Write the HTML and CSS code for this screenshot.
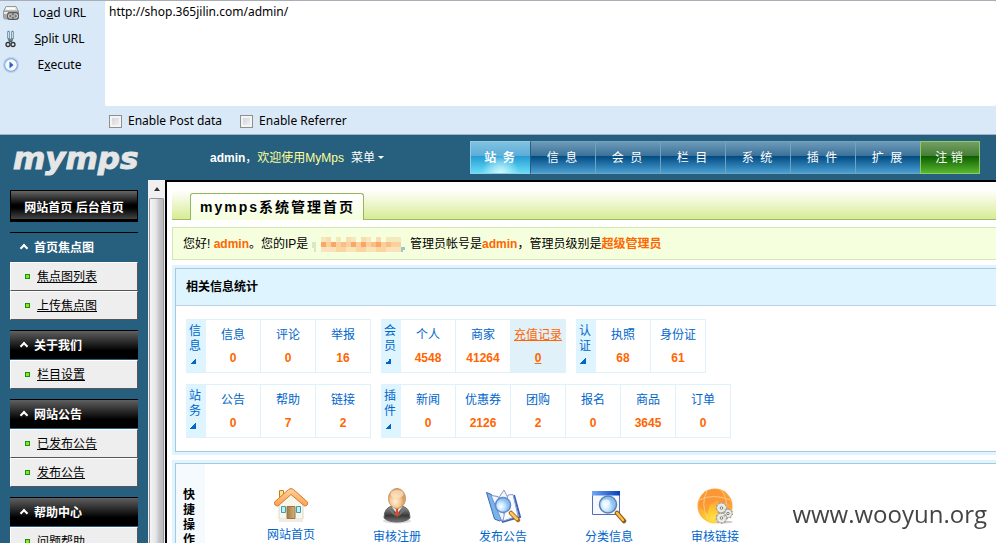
FILE: index.html
```html
<!DOCTYPE html>
<html lang="zh-CN">
<head>
<meta charset="utf-8">
<title>mymps系统管理首页</title>
<link rel="stylesheet" href="styles.css">
</head>
<body>
<form class="toolbar">
  <div class="commands">
    <button type="button" class="command">
      <svg width="18" height="18" viewBox="0 0 18 18"><path d="M4 2.500h10l2.500 5H1.500z" fill="#e4e4e1" stroke="#9a9a9a"/><path d="M1.500 7h15v6q-1 2-3 2h-10q-2 0-2-2z" fill="#a9a9a9" stroke="#999"/><path d="M4 4.500h9" stroke="#fff" stroke-width="2"/><path d="M2 9h4" stroke="#e8e8e8" stroke-width="2"/><rect x="5.500" y="8.500" width="11" height="7" rx="2" fill="#777" stroke="#5c5c5c"/><path d="M10 10H8.500a1.500 1.500 0 0 0 0 4H10M12 10h1.500a1.500 1.500 0 0 1 0 4H12M9 12h4" fill="none" stroke="#ddd"/></svg>
      <span>Lo<u>a</u>d URL</span>
    </button>
    <button type="button" class="command">
      <svg width="18" height="18" viewBox="0 0 18 18"><path d="M6.500 2v6l1.500 3M10.500 2v6L9 11" fill="none" stroke="#638795" stroke-width="2.500" stroke-linecap="round"/><path d="M6.500 2v6M10.500 2v6" stroke="#c9dce3"/><path d="M7 10.500l1.500 1.500 1.500-1.500" fill="none" stroke="#333"/><circle cx="6" cy="14.500" r="2" fill="none" stroke="#333" stroke-width="1.300"/><circle cx="11" cy="14.500" r="2" fill="none" stroke="#333" stroke-width="1.300"/></svg>
      <span><u>S</u>plit URL</span>
    </button>
    <button type="button" class="command">
      <svg width="18" height="18" viewBox="0 0 18 18"><circle cx="9" cy="9" r="8" fill="#b9d1ef"/><circle cx="9" cy="9" r="6.800" fill="#86a8d2"/><circle cx="9" cy="9" r="5.800" fill="#f6faff"/><path d="M7.500 5.500l4 3.500-4 3.500z" fill="#2563c4"/></svg>
      <span>E<u>x</u>ecute</span>
    </button>
  </div>
  <div class="request">
    <textarea class="url" aria-label="URL" spellcheck="false">http://shop.365jilin.com/admin/</textarea>
    <div class="options">
      <label class="option"><input type="checkbox">Enable Post data</label>
      <label class="option"><input type="checkbox">Enable Referrer</label>
    </div>
  </div>
</form>
<header class="header">
  <a class="logo" href="#">mymps</a>
  <p class="welcome"><b>admin</b>，<span>欢迎使用MyMps</span><a class="drop" href="#">菜单</a></p>
  <nav class="tabs">
    <a class="tab active" href="#">站&nbsp;&nbsp;务</a>
    <a class="tab" href="#">信&nbsp;&nbsp;息</a>
    <a class="tab" href="#">会&nbsp;&nbsp;员</a>
    <a class="tab" href="#">栏&nbsp;&nbsp;目</a>
    <a class="tab" href="#">系&nbsp;&nbsp;统</a>
    <a class="tab" href="#">插&nbsp;&nbsp;件</a>
    <a class="tab" href="#">扩&nbsp;&nbsp;展</a>
    <a class="tab logout" href="#">注&nbsp;销</a>
  </nav>
</header>
<div class="workspace">
  <aside class="sidebar">
    <div class="home"><a href="#">网站首页</a> <a href="#">后台首页</a></div>
    <section class="menu current">
      <h2>首页焦点图</h2>
      <ul><li><a href="#">焦点图列表</a></li><li><a href="#">上传焦点图</a></li></ul>
    </section>
    <section class="menu">
      <h2>关于我们</h2>
      <ul><li><a href="#">栏目设置</a></li></ul>
    </section>
    <section class="menu">
      <h2>网站公告</h2>
      <ul><li><a href="#">已发布公告</a></li><li><a href="#">发布公告</a></li></ul>
    </section>
    <section class="menu">
      <h2>帮助中心</h2>
      <ul><li><a href="#">问题帮助</a></li></ul>
    </section>
  </aside>
  <div class="scrollbar"><div class="scroll-up"></div><div class="thumb"></div></div>
  <main class="main">
    <div class="titlebar"><h1>mymps系统管理首页</h1></div>
    <p class="notice">您好! <b>admin</b>。您的IP是
      <svg class="mosaic" width="95" height="15" viewBox="0 0 95 15" shape-rendering="crispEdges"><path d="M0 5h4v10H2V11H0z" fill="#dbe6c8"/><path d="M9 0h5v5h-5zM24 0h5v5h-5zM39 0h5v5h-5zM54 0h5v5h-5zM74 0h15v5H74z" fill="#f4e8bd"/><path d="M14 0h5v5h-5zM34 0h5v5h-5zM49 0h5v5h-5zM64 0h5v5h-5z" fill="#fbdcae"/><path d="M9 5h80v5H9z" fill="#fbd0a0"/><path d="M9 5h5v5h-5zM19 5h5v5h-5zM39 5h5v5h-5zM49 5h5v5h-5zM64 5h5v5h-5z" fill="#faa765"/><path d="M29 5h5v5h-5zM59 5h5v5h-5zM74 5h5v5h-5z" fill="#fcbd84"/><path d="M9 10h80v5H9z" fill="#f8e4b8"/><path d="M24 10h10v5H24zM44 10h10v5H44zM64 10h10v5H64z" fill="#fad5a0"/><path d="M89 10h4v3h-2v2h-2z" fill="#9bcac3"/></svg>
      管理员帐号是<b>admin</b>，管理员级别是<b>超级管理员</b></p>
    <section class="panel">
      <h2>相关信息统计</h2>
      <div class="stats">
        <div class="row">
          <div class="group"><h3>信息</h3><a href="#">信息<b>0</b></a><a href="#">评论<b>0</b></a><a href="#">举报<b>16</b></a></div>
          <div class="group"><h3>会员</h3><a href="#">个人<b>4548</b></a><a href="#">商家<b>41264</b></a><a class="hovered" href="#">充值记录<b>0</b></a></div>
          <div class="group"><h3>认证</h3><a href="#">执照<b>68</b></a><a href="#">身份证<b>61</b></a></div>
        </div>
        <div class="row">
          <div class="group"><h3>站务</h3><a href="#">公告<b>0</b></a><a href="#">帮助<b>7</b></a><a href="#">链接<b>2</b></a></div>
          <div class="group"><h3>插件</h3><a href="#">新闻<b>0</b></a><a href="#">优惠券<b>2126</b></a><a href="#">团购<b>2</b></a><a href="#">报名<b>0</b></a><a href="#">商品<b>3645</b></a><a href="#">订单<b>0</b></a></div>
        </div>
      </div>
    </section>
    <section class="panel quick">
      <h2>快捷操作</h2>
      <ul class="shortcuts">
        <li><a href="#">
          <svg width="36" height="34" viewBox="0 0 36 34"><defs><linearGradient id="door" x2="1"><stop stop-color="#a37a42"/><stop offset="1" stop-color="#d3b27d"/></linearGradient><linearGradient id="roof" x2="0" y2="1"><stop stop-color="#ffd29d"/><stop offset="1" stop-color="#f9a254"/></linearGradient></defs><path d="M6.500 2.500h4v9h-4z" fill="#ffe098" stroke="#cf7b16"/><path d="M6 16L18 5l12 11v15H6z" fill="#faf6ea" stroke="#ddd8ca"/><path d="M6 31h24v3H6z" fill="#eeece5"/><path d="M14 18.500h8v12h-8z" fill="url(#door)" stroke="#9a7649"/><path d="M8.500 18.500h4v6h-4zM23.500 18.500h4v6h-4z" fill="#bdf0f5" stroke="#3d9eaf"/><path d="M1.500 14L15.500 1.500q2.500-2 5 0l14 12.500q.8 4-3 4L18 6.500 5 18Q1 18 1.500 14z" fill="url(#roof)" stroke="#d77a28"/></svg>
          网站首页</a></li>
        <li><a href="#">
          <svg width="36" height="36" viewBox="0 0 36 36"><defs><radialGradient id="face" cx=".4" cy=".65"><stop stop-color="#fff1df"/><stop offset=".6" stop-color="#f6c995"/><stop offset="1" stop-color="#d6a067"/></radialGradient><linearGradient id="suit" x2="0" y2="1"><stop stop-color="#9c9c9c"/><stop offset=".6" stop-color="#383838"/><stop offset="1" stop-color="#777"/></linearGradient></defs><ellipse cx="18" cy="33" rx="14" ry="2.500" fill="#ddd"/><path d="M5 30q0-11 9-12h8q9 1 9 12-4 4-13 4T5 30z" fill="url(#suit)" stroke="#666"/><path d="M13 19l5 7 5-7z" fill="#eee"/><path d="M16.500 20h3l-.5 3 1.500 3-2.500 3-2.500-3 1.500-3z" fill="#d64d2b"/><path d="M12 19l5 10-6-6zM24 19l-5 10 6-6z" fill="#777"/><ellipse cx="18" cy="10.500" rx="8.500" ry="10" fill="url(#face)" stroke="#c9975f"/><ellipse cx="18" cy="6" rx="6.500" ry="4" fill="#ffe7c8" opacity=".7"/></svg>
          审核注册</a></li>
        <li><a href="#">
          <svg width="36" height="36" viewBox="0 0 36 36"><defs><radialGradient id="lens" cx=".35" cy=".6"><stop stop-color="#fff"/><stop offset=".5" stop-color="#c9eaff"/><stop offset="1" stop-color="#8abfef"/></radialGradient></defs><path d="M13 11l6-9 6 12-6 14z" fill="#f5f7fc" stroke="#8c98b8"/><path d="M1.500 4.500l5 2 10 25-2 1.500-5-2z" fill="#78b4ec" stroke="#4564b4"/><path d="M6 7.500l7 1 7 20-3 5z" fill="#f0f6ff" stroke="#7890c5"/><path d="M29 7l6 22-18 5" fill="none" stroke="#3a63b5" stroke-width="2"/><path d="M23 7l5-.5L33 28l-15 5z" fill="#f7faff" stroke="#899bc9"/><circle cx="18" cy="17" r="7.500" fill="url(#lens)" stroke="#6486cb" stroke-width="1.500"/><path d="M26 25l7 7" stroke="#a56b19" stroke-width="4.500" stroke-linecap="round"/><path d="M26 25l6 6" stroke="#ffc85b" stroke-width="2.500" stroke-linecap="round"/></svg>
          发布公告</a></li>
        <li><a href="#">
          <svg width="36" height="36" viewBox="0 0 36 36"><defs><linearGradient id="bar" x2="1"><stop stop-color="#73a8f5"/><stop offset="1" stop-color="#063dbd"/></linearGradient></defs><path d="M1.500 3.500h27v23h-27z" fill="#f6f8fe" stroke="#536eb8"/><path d="M1 3h28v4.500H1z" fill="url(#bar)"/><circle cx="17" cy="16.500" r="8.500" fill="url(#lens)" stroke="#5f80b5" stroke-width="1.500"/><ellipse cx="15" cy="14.500" rx="4" ry="3" fill="#fff" opacity=".6"/><path d="M26 25l7 8" stroke="#8b5a18" stroke-width="4.500" stroke-linecap="round"/><path d="M26 25l6 7" stroke="#ffbd47" stroke-width="2.500" stroke-linecap="round"/></svg>
          分类信息</a></li>
        <li><a href="#">
          <svg width="36" height="36" viewBox="0 0 36 36"><defs><radialGradient id="globe" cx=".45" cy=".85"><stop stop-color="#ffe34c"/><stop offset=".55" stop-color="#ffc32e"/><stop offset="1" stop-color="#ffa53c"/></radialGradient></defs><circle cx="18" cy="18" r="17.500" fill="url(#globe)"/><path d="M2 18Q1 9 8 4q8-5 17-1l6 6 3 8-4-2-6 0-4-3-7 5-3 9-5-5z" fill="#f68f33" opacity=".6"/><path d="M2 12q15-7 31 0M10 3q-7 13 1 28M24 2q7 8 5 20" fill="none" stroke="#ffd999" opacity=".7"/><ellipse cx="27" cy="34" rx="9" ry="1.500" fill="#ccc"/><g fill="#ebebe6" stroke="#b9b5a6"><circle cx="24.500" cy="20" r="5" /><circle cx="31" cy="25.500" r="4.200"/><circle cx="24.500" cy="30" r="5"/></g><g fill="none" stroke="#a5a193" stroke-width="1.500" stroke-dasharray="1.500 2"><circle cx="24.500" cy="20" r="5.200"/><circle cx="31" cy="25.500" r="4.500"/><circle cx="24.500" cy="30" r="5.200"/></g><g fill="#fff" stroke="#777"><circle cx="24.500" cy="20" r="1.300"/><circle cx="31" cy="25.500" r="1.200"/><circle cx="24.500" cy="30" r="1.300"/></g></svg>
          审核链接</a></li>
      </ul>
    </section>
  </main>
</div>
<div class="watermark">www.wooyun.org</div>
</body>
</html>
```
FILE: styles.css
```css
* { box-sizing: border-box; }
body {
  margin: 0;
  height: 100vh;
  overflow: hidden;
  display: flex;
  flex-direction: column;
  background: #fff;
  color: #000;
  font: 12px/16px "Liberation Sans", "Noto Sans CJK SC", sans-serif;
}
h1, h2, h3, p, ul { margin: 0; padding: 0; }
ul { list-style: none; }
a { color: inherit; text-decoration: none; }

/* Request toolbar */
.toolbar {
  flex: none;
  display: flex;
  background: #dae9f8;
  border-top: 1px solid #a9adb5;
  border-bottom: 1px solid #9fb4c8;
  font: 12px/18px "Noto Sans", sans-serif;
}
.commands { width: 105px; flex: none; padding-left: 2px; }
.command {
  display: flex;
  align-items: center;
  width: 100%;
  height: 26px;
  padding: 0 6px 3px 0;
  border: 0;
  background: none;
  color: #000;
  font: inherit;
}
.command span { flex: 1; text-align: center; }
.request { flex: 1; display: flex; flex-direction: column; }
.url {
  display: block;
  height: 105px;
  width: 100%;
  padding: 2px 4px;
  border: 0;
  border-radius: 2px;
  background: #fff;
  color: #000;
  font: inherit;
  resize: none;
  outline: 0;
}
.options { display: flex; gap: 18px; padding: 6px 4px 4px; }
.option { display: flex; align-items: center; gap: 6px; }
.option input {
  appearance: none;
  width: 13px;
  height: 13px;
  margin: 0;
  border: 1px solid #8e8f8f;
  background: linear-gradient(135deg, #cbcfd5, #f6f6f6);
  box-shadow: inset 0 0 0 2px #f4f4f4;
}

/* Header */
.header {
  flex: none;
  display: flex;
  align-items: center;
  height: 45px;
  padding-right: 16px;
  background: #26607e;
}
.logo {
  width: 210px;
  padding-left: 13px;
  color: #e6e6e6;
  font: italic bold 31px/40px "DejaVu Sans", sans-serif;
  -webkit-text-stroke: 1px #e6e6e6;
}
.welcome { flex: 1; color: #fff; }
.welcome span { color: #ff9; }
.drop { margin-left: 7px; }
.drop::after {
  content: "";
  display: inline-block;
  margin-left: 3px;
  vertical-align: 3px;
  border: 3px solid transparent;
  border-top-color: #fff;
  border-bottom: 0;
}
.tabs { display: flex; }
.tab {
  width: 65px;
  height: 33px;
  padding-right: 2px;
  border: 1px solid #6fa3c2;
  border-width: 1px 0 1px 1px;
  background: linear-gradient(#6d9ab9, #3a7199 45%, #004a80 45%, #4a9fd3);
  color: #fff;
  line-height: 32px;
  text-align: center;
}
.tab.active {
  width: 60px;
  border-color: #8fcde8;
  background: radial-gradient(ellipse at 50% 105%, #d5fbff, transparent 45%), linear-gradient(#80c1e1, #5badd9 45%, #249ad3 45%, #66dcf6);
  font-weight: bold;
}
.tab:nth-child(2) { border-left-color: #26607e; }
.tab.logout {
  width: 60px;
  border: 1px solid #8acb64;
  background: linear-gradient(#759f64, #447e35 45%, #0b5c00 45%, #58b72e);
}

/* Body */
.workspace { flex: 1; min-height: 0; display: flex; background: #26607e; }
.sidebar {
  flex: none;
  display: flex;
  flex-direction: column;
  gap: 10px;
  width: 148px;
  padding: 10px 10px 0;
  overflow: hidden;
}
.home {
  flex: none;
  height: 32px;
  border: 1px solid #000;
  border-bottom-width: 3px;
  background: linear-gradient(#666, #000 50%, #000 60%, #444);
  color: #fff;
  font-weight: bold;
  line-height: 34px;
  text-align: center;
}
.menu { flex: none; }
.menu h2 {
  display: flex;
  align-items: center;
  gap: 7px;
  height: 29px;
  margin-bottom: 1px;
  padding: 1px 0 0 11px;
  border-top: 1px solid #000;
  background: linear-gradient(#606060, #000 70%);
  color: #fff;
  font-size: 12px;
}
.menu.current h2 { background: none; }
.menu h2::before {
  content: "";
  width: 6px;
  height: 6px;
  border: 2px solid #fff;
  border-width: 2px 0 0 2px;
  transform: rotate(45deg);
}
.menu li {
  display: flex;
  align-items: center;
  gap: 7px;
  height: 29px;
  padding-left: 14px;
  border: 1px solid #fff;
  border-right-color: #555;
  border-bottom-color: #555;
  background: #eee;
}
.menu li::before {
  content: "";
  width: 5px;
  height: 5px;
  border: 1px solid #189018;
  background: #8ce810;
}
.menu h2::before, .menu li::before { box-sizing: border-box; flex: none; }
.menu li a { text-decoration: underline; }
.scrollbar {
  flex: none;
  display: flex;
  flex-direction: column;
  width: 17px;
  background: #f0f0f0;
}
.scroll-up { height: 18px; padding: 7px 6px; }
.scroll-up::before {
  content: "";
  display: block;
  border: 3px solid transparent;
  border-top: 0;
  border-bottom: 4px solid #333;
}
.thumb {
  flex: 1;
  margin: 0 1px;
  border: 1px solid #979797;
  border-bottom: 0;
  border-radius: 2px 2px 0 0;
  background: linear-gradient(90deg, #f5f5f5, #e5e5e8 45%, #c5c5ca 70%, #b9b9be);
}

.main {
  flex: 1;
  min-width: 0;
  padding: 8px 0 0 5px;
  border: solid #000;
  border-width: 2px 0 0 2px;
  background: #fff;
  overflow: hidden;
}
.titlebar {
  display: flex;
  height: 30px;
  padding: 3px 0 0 18px;
  border-bottom: 1px solid #9bbb6b;
  background: linear-gradient(#fff, #d8ec94);
}
.titlebar h1 {
  height: 27px;
  padding: 0 8px 0 9px;
  border: 1px solid #94b563;
  border-bottom: 0;
  border-radius: 3px 3px 0 0;
  background: linear-gradient(#fff, #f5ffdc);
  font-size: 14px;
  line-height: 27px;
  letter-spacing: 2px;
}
.notice {
  height: 33px;
  margin: 7px 0 8px;
  padding-left: 10px;
  border: 1px solid #d2e8b1;
  border-right: 0;
  background: #f5ffdd;
  line-height: 32px;
}
.notice b { color: #f60; }
.mosaic { vertical-align: middle; }
.panel {
  margin: 0 0 11px 3px;
  border: 1px solid #aac8da;
  border-right: 0;
  outline: 3px solid #def4ff;
}
.panel > h2 {
  height: 37px;
  padding-left: 10px;
  border-bottom: 1px solid #bcd2e4;
  background: #def4ff;
  font-size: 12px;
  line-height: 37px;
}
.stats { display: grid; gap: 11px; padding: 13px 10px; }
.row { display: flex; gap: 10px; }
.group { display: flex; height: 54px; border: 1px solid #def2fb; border-left: 0; }
.group h3 {
  width: 20px;
  padding: 4px 5px 0 3px;
  background: #def4ff;
  color: #06c;
  font-size: 12px;
  font-weight: normal;
  line-height: 15px;
}
.group h3::after {
  content: "";
  display: block;
  width: 6px;
  height: 6px;
  margin: 4px 0 0 1px;
  background: linear-gradient(135deg, transparent 50%, #06c 50%);
}
.group a {
  width: 55px;
  padding-top: 4px;
  border-right: 1px solid #def2fb;
  color: #06c;
  line-height: 23px;
  text-align: center;
  white-space: nowrap;
}
.group a:last-child { width: 54px; border-right: 0; }
.group b { display: block; color: #f60; }
.group .hovered { background: #e0f1fa; color: #f60; text-decoration: underline; }
.quick { display: flex; }
.quick > h2 {
  width: 29px;
  height: auto;
  padding: 24px 8px 24px 7px;
  border: 0;
  background: #f5faff;
  line-height: 15px;
}
.shortcuts { display: flex; padding: 24px 0 0 33px; }
.shortcuts li { width: 106px; color: #06c; text-align: center; }
.shortcuts svg { display: block; margin: 0 auto 5px; }

.watermark {
  position: fixed;
  right: 9px;
  bottom: 12px;
  color: #444;
  font: 24px/34px "Open Sans", sans-serif;
}
```
